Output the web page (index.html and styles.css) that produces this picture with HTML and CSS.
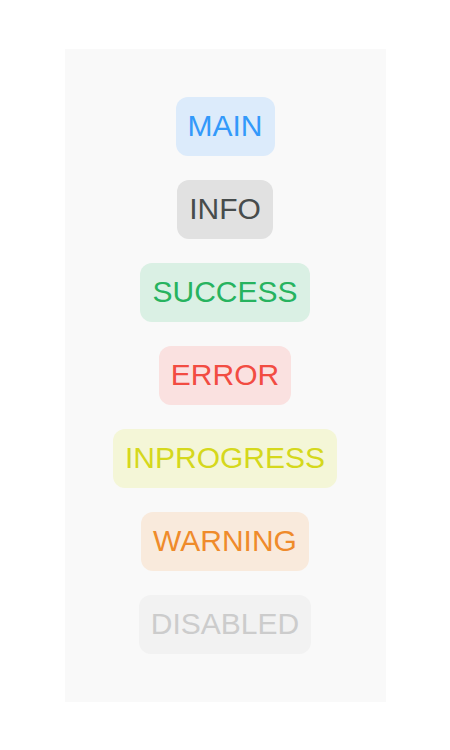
FILE: index.html
```html
<!DOCTYPE html>
<html lang="en">
<head>
<meta charset="utf-8">
<title>Badges</title>
<link rel="stylesheet" href="styles.css">
</head>
<body>
<div class="panel">
  <span class="badge badge-main">MAIN</span>
  <span class="badge badge-info">INFO</span>
  <span class="badge badge-success">SUCCESS</span>
  <span class="badge badge-error">ERROR</span>
  <span class="badge badge-progress">INPROGRESS</span>
  <span class="badge badge-warning">WARNING</span>
  <span class="badge badge-disabled">DISABLED</span>
</div>
</body>
</html>
```
FILE: styles.css
```css
html, body {
  margin: 0;
  padding: 0;
  background: #ffffff;
}
body {
  font-family: "Liberation Sans", Arial, sans-serif;
}
.panel {
  width: 321px;
  margin: 49px auto 0;
  padding: 48px 0;
  background: #f9f9f9;
  display: flex;
  flex-direction: column;
  align-items: center;
  gap: 24.5px;
}
.badge {
  display: block;
  font-size: 30px;
  line-height: 34.5px;
  padding: 12px;
  border-radius: 12px;
}
.badge-main { background: #dcebfb; color: #3399fa; }
.badge-info { background: #e1e1e1; color: #474c4c; }
.badge-success { background: #daf0e4; color: #27b35f; }
.badge-error { background: #fae1e0; color: #f24c42; }
.badge-progress { background: #f4f6d7; color: #d5d81c; }
.badge-warning { background: #f9eadc; color: #ef8b2b; }
.badge-disabled { background: #f2f2f2; color: #cccccc; }
```
